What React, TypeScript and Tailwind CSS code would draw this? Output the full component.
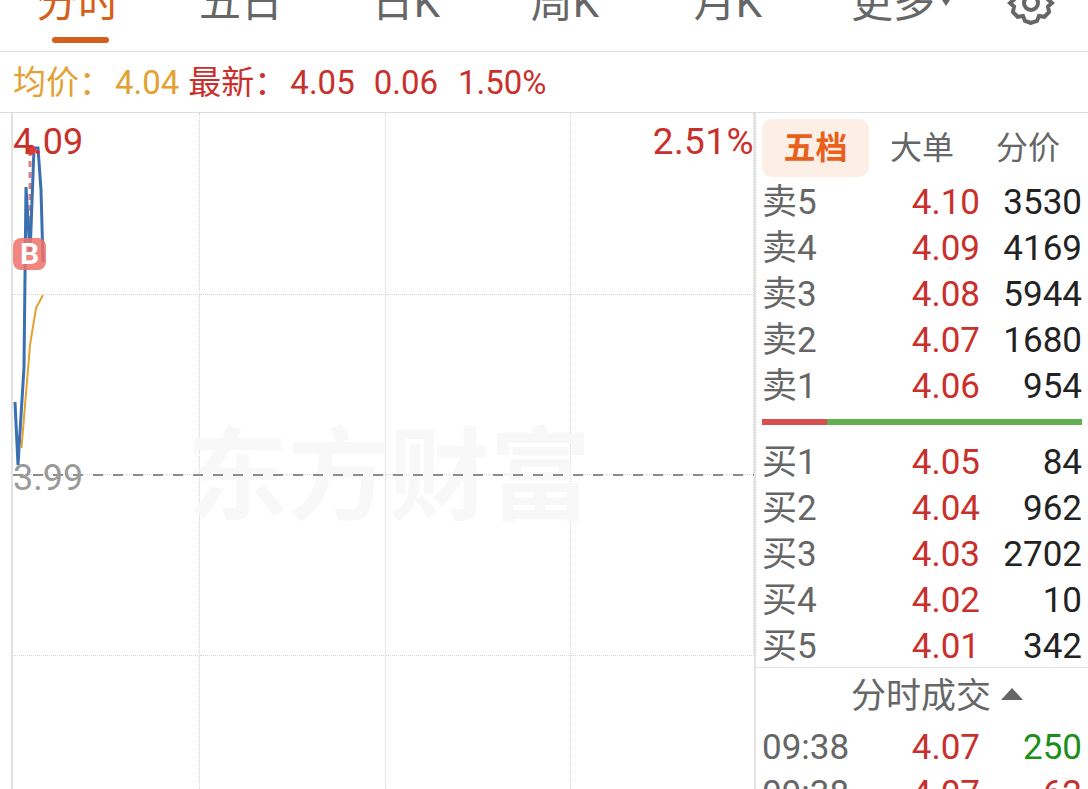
const cjk = { fontFamily: 'Roboto, "Noto Sans CJK SC", sans-serif' };

const tabs = ["分时", "五日", "日K", "周K", "月K", "更多"];

const sells = [
  ["卖5", "4.10", "3530"],
  ["卖4", "4.09", "4169"],
  ["卖3", "4.08", "5944"],
  ["卖2", "4.07", "1680"],
  ["卖1", "4.06", "954"],
];

const buys = [
  ["买1", "4.05", "84"],
  ["买2", "4.04", "962"],
  ["买3", "4.03", "2702"],
  ["买4", "4.02", "10"],
  ["买5", "4.01", "342"],
];

function Row({ row, volClass = "text-[#222222]" }: { row: string[]; volClass?: string }) {
  return (
    <div className="grid h-[46px] grid-cols-[1fr_auto_102px] items-center text-[35px] leading-none">
      <span className="text-[#666666]">{row[0]}</span>
      <span className="text-[#c9302c]">{row[1]}</span>
      <span className={`text-right ${volClass}`}>{row[2]}</span>
    </div>
  );
}

function Chart() {
  return (
    <div className="relative h-[724px] flex-1 overflow-hidden border-l-2 border-[#e2e2e2]">
      <div className="grid h-full grid-cols-[187px_186px_185px_1fr] grid-rows-[182px_180px_181px_1fr]">
        {Array.from({ length: 16 }).map((_, i) => (
          <div key={i} className="border-r border-b border-dotted border-[#d6d6d6] last:border-0" />
        ))}
      </div>
      {/* watermark */}
      <div className="absolute left-[174px] top-[301px] text-[101px] font-bold leading-[128px] text-[#f8f8f8]">
        东方财富
      </div>
      <svg className="absolute inset-x-0 top-[361px]" width="100%" height="2">
        <line x1="0" y1="1" x2="100%" y2="1" stroke="#8c8c8c" strokeWidth="2" strokeDasharray="10 10" />
      </svg>
      <svg className="absolute left-0 top-0" width="60" height="400" fill="none">
        <path d="M17 37V130" stroke="#e08080" strokeWidth="3" strokeDasharray="6 5" />
        <path
          d="M2 289L5 352L11 254L13 74L17 142L21 35L25 35L28 77L30 149"
          stroke="#3a70b0"
          strokeWidth="3"
        />
        <path d="M8.500 335L17 232L23 195L30 182" stroke="#e2a132" strokeWidth="2" />
        <circle cx="18" cy="37" r="5" fill="#e0393a" />
      </svg>
      <span className="absolute left-0 top-[8px] text-[36px] leading-[42px] text-[#c9302c]">4.09</span>
      <span className="absolute right-0 top-[8px] text-[37px] leading-[42px] tracking-[0.4px] text-[#c9302c]">2.51%</span>
      <span className="absolute left-0 top-[344px] text-[36px] leading-[42px] text-[#9a9a9a]">3.99</span>
      <div className="absolute left-0 top-[125px] flex h-[32px] w-[33px] items-center justify-center rounded-[8px] bg-[#f0716a]/85 text-[30px] font-bold leading-none text-white">
        B
      </div>
    </div>
  );
}

export default function App() {
  return (
    <div className="h-[789px] w-[1088px] overflow-hidden bg-white" style={cjk}>
      <div className="grid h-[52px] grid-cols-[156px_170px_160px_158px_168px_162px_114px] border-b border-[#dcdcdc]">
        {tabs.map((t, i) => (
          <div key={t} className="relative flex justify-center">
            <span
              className={`-mt-[17px] h-[40px] text-[42px] leading-[40px] ${i === 0 ? "text-[#d4601c]" : "text-[#666666]"}`}
            >
              {t}
            </span>
            {i === 0 && <div className="absolute left-[52px] top-[37px] h-[6px] w-[57px] rounded-full bg-[#d4601c]" />}
            {i === 5 && <span className="absolute left-[130px] top-0 h-0 w-0 border-x-[4px] border-t-[6px] border-x-transparent border-t-[#666666]" />}
          </div>
        ))}
        <div className="flex justify-center">
          <svg className="-mt-[21px] shrink-0" width="48" height="48" viewBox="0 0 24 24" fill="none" stroke="#666666" strokeWidth="2">
            <path d="M12 22l-3-1-1-2.500-2.700.4-2.300-2.400.5-2.700L1.500 12l2-1.800-.5-2.700L5.300 5.100l2.700.4L9 3h6l1 2.500 2.700-.4 2.300 2.400-.5 2.700 2 1.800-2 1.800.5 2.700-2.300 2.400-2.700-.4L15 21z" />
            <circle cx="12" cy="12" r="3.500" />
          </svg>
        </div>
      </div>

      <div className="flex h-[61px] items-center border-b border-[#dcdcdc] pl-[13px] text-[33px] leading-none text-[#c9302c]">
        <span className="text-[#e2a132]">{"均价\uFF1A"}</span>
        <span className="ml-[3px] text-[#e2a132]">4.04</span>
        <span className="ml-[9px]">{"最新\uFF1A"}</span>
        <span className="ml-[3px]">4.05</span>
        <span className="ml-[19px]">0.06</span>
        <span className="ml-[20px]">1.50%</span>
      </div>

      <div className="flex pl-[11px]">
        <Chart />
        <div className="w-[334px] border-l-2 border-[#e2e2e2]">
          <div className="flex h-[66px] items-start px-[6px] pt-[6px] text-[32px] leading-none">
            <div className="flex h-[58px] w-[107px] items-center justify-center rounded-[10px] bg-[#fdeee6] font-bold text-[#e8601c]">
              五档
            </div>
            <div className="flex h-[58px] w-[106px] items-center justify-center text-[#666666]">大单</div>
            <div className="flex h-[58px] w-[106px] items-center justify-center text-[#666666]">分价</div>
          </div>
          <div className="px-[6px]">
            {sells.map((r) => (
              <Row key={r[0]} row={r} />
            ))}
            <div className="my-[10px] flex h-[6px] bg-[#62b04f]">
              <div className="w-[65px] bg-[#d85050]" />
            </div>
            <div className="h-[4px]" />
            {buys.map((r) => (
              <Row key={r[0]} row={r} />
            ))}
          </div>
          <div className="-mt-[2px] flex h-[57px] items-center justify-center gap-[10px] border-t border-[#e2e2e2] pl-[30px] text-[35px] leading-none text-[#666666]">
            分时成交
            <span className="mb-[5px] h-0 w-0 border-x-[11px] border-b-[12px] border-x-transparent border-b-[#666666]" />
          </div>
          <div className="px-[6px]">
            <Row row={["09:38", "4.07", "250"]} volClass="text-[#1a8f1a]" />
            <Row row={["09:38", "4.07", "62"]} volClass="text-[#c9302c]" />
          </div>
        </div>
      </div>
    </div>
  );
}
